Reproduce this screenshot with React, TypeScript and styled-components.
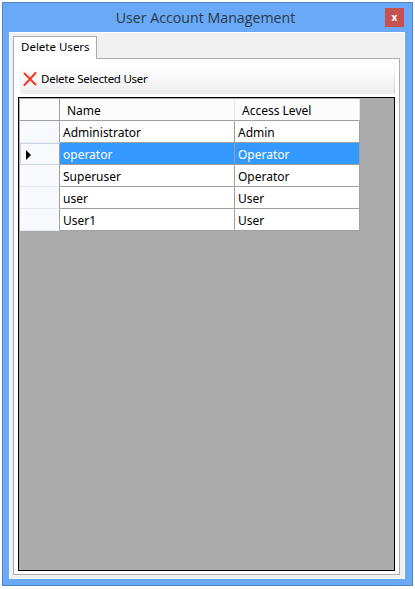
import { createGlobalStyle } from "styled-components";
import styled from "styled-components";

const users = [
  { name: "Administrator", level: "Admin" },
  { name: "operator", level: "Operator" },
  { name: "Superuser", level: "Operator" },
  { name: "user", level: "User" },
  { name: "User1", level: "User" },
];
const selectedRow = 1;

function App() {
  return (
    <>
      <Global />
      <Window>
        <TitleBar>
          <Title>User Account Management</Title>
          <CloseButton>x</CloseButton>
        </TitleBar>
        <Client>
          <Tabs>
            <Tab>Delete Users</Tab>
          </Tabs>
          <Panel>
            <Toolbar>
              <svg width="14" height="14" viewBox="0 0 14 14">
                <path d="M1.5 1.5 L12.5 12.5 M12.5 1 L1.5 13" stroke="#ee3a24" strokeWidth="2" strokeLinecap="round" fill="none" />
              </svg>
              <span>Delete Selected User</span>
            </Toolbar>
            <Grid>
              <HeaderRow>
                <Corner />
                <HeadCell $width={175}>Name</HeadCell>
                <HeadCell $width={125}>Access Level</HeadCell>
              </HeaderRow>
              {users.map((u, i) => (
                <Row key={u.name}>
                  <RowHead $current={i === selectedRow}>
                    {i === selectedRow && <Arrow />}
                  </RowHead>
                  <Cell $width={175} $selected={i === selectedRow}>{u.name}</Cell>
                  <Cell $width={125} $selected={i === selectedRow}>{u.level}</Cell>
                </Row>
              ))}
            </Grid>
          </Panel>
        </Client>
      </Window>
    </>
  );
}

const Global = createGlobalStyle`
  html, body {
    margin: 0;
    padding: 0;
    background: #fff;
  }
  * {
    box-sizing: border-box;
  }
`;
const Window = styled.div`
  width: 411px;
  height: 584px;
  margin: 2px 0 0 2px;
  background: #69a9f5;
  border: 1px solid #4f86c6;
  padding: 0 7px 6px 6px;
  display: flex;
  flex-direction: column;
  font-family: "Noto Sans", sans-serif;
  font-size: 12px;
  line-height: 15px;
  color: #000;
`;
const TitleBar = styled.div`
  height: 29px;
  flex: none;
  position: relative;
  display: flex;
  align-items: center;
  justify-content: center;
`;
const Title = styled.div`
  font-family: "Open Sans", sans-serif;
  font-size: 14.2px;
  line-height: 20px;
  color: #2b3a4a;
  margin: 0 3px 0 0;
`;
const CloseButton = styled.div`
  position: absolute;
  right: 1px;
  top: 5px;
  width: 19px;
  height: 19px;
  background: #c75050;
  color: #fff;
  font-weight: bold;
  font-size: 10px;
  display: flex;
  align-items: center;
  justify-content: center;
`;
const Client = styled.div`
  flex: 1;
  background: #f0f0f0;
  border: 1px solid #fff;
  padding: 3px 4px 3px 3px;
  display: flex;
  flex-direction: column;
`;
const Tabs = styled.div`
  height: 23px;
  flex: none;
  display: flex;
  position: relative;
  z-index: 1;
`;
const Tab = styled.div`
  width: 84px;
  height: 23px;
  background: #fff;
  border: 1px solid #acacac;
  border-bottom: none;
  padding: 2px 0 0 7px;
  font-size: 11.5px;
`;
const Panel = styled.div`
  flex: 1;
  margin-top: -1px;
  background: #fff;
  border: 1px solid #acacac;
  padding: 4px 4px 3px 4px;
  display: flex;
  flex-direction: column;
`;
const Toolbar = styled.div`
  height: 31px;
  flex: none;
  margin: 0 0 3px 2px;
  border-radius: 3px;
  border-right: 1px solid;
  border-image: linear-gradient(#ffffff, #c8c8c8) 1;
  background: linear-gradient(#ffffff, #f8f8f8 50%, #ededed);
  display: flex;
  align-items: center;
  gap: 4px;
  padding-left: 3px;
  font-size: 11.5px;
  letter-spacing: -0.25px;
`;
const Grid = styled.div`
  flex: 1;
  background: #ababab;
  border: 1px solid #000;
  padding: 1px;
`;
const HeaderRow = styled.div`
  display: flex;
  height: 22px;
`;
const Corner = styled.div`
  width: 40px;
  background: #fcfcfd;
  border-right: 1px solid #a0a0a0;
  border-bottom: 1px solid #a0a0a0;
`;
const HeadCell = styled.div<{ $width: number }>`
  width: ${(p) => p.$width}px;
  background: #fcfcfd;
  border-right: 1px solid #e3ebf5;
  border-bottom: 1px solid #a0a0a0;
  padding: 4px 0 0 7px;
`;
const Row = styled.div`
  display: flex;
  height: 22px;
`;
const RowHead = styled.div<{ $current: boolean }>`
  width: 40px;
  background: #f8f9fc;
  border-right: 1px solid #a0a0a0;
  border-bottom: 1px solid #e3ebf5;
  display: flex;
  align-items: center;
  padding-left: 5px;
  ${(p) => p.$current && "border: 1px solid #c8d4e4; border-right: 1px solid #a0a0a0; padding-top: 2px;"}
`;
const Arrow = styled.div`
  width: 0;
  height: 0;
  border-left: 5px solid #000;
  border-top: 5px solid transparent;
  border-bottom: 5px solid transparent;
`;
const Cell = styled.div<{ $width: number; $selected: boolean }>`
  width: ${(p) => p.$width}px;
  background: ${(p) => (p.$selected ? "#3399ff" : "#fff")};
  color: ${(p) => (p.$selected ? "#fff" : "#000")};
  border-right: 1px solid #a0a0a0;
  border-bottom: 1px solid #a0a0a0;
  padding: 4px 0 0 3px;
`;

export default App;
